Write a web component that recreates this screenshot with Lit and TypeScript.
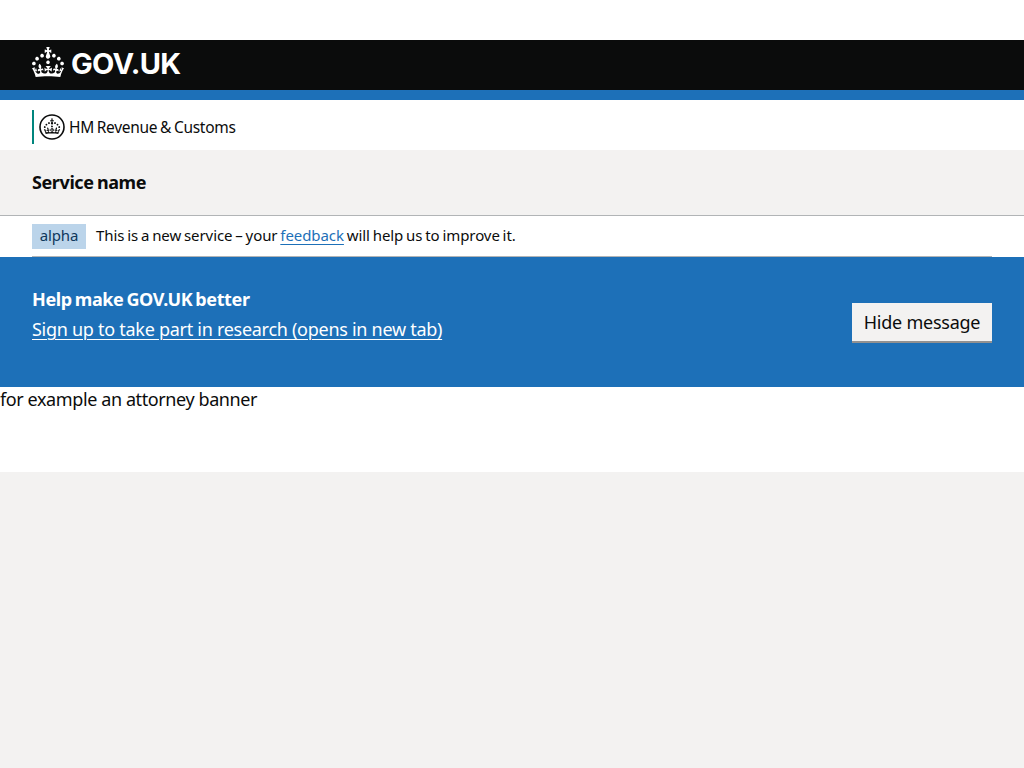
import { LitElement, html, css, svg } from "lit";
import { customElement } from "lit/decorators.js";

const crown = svg`<path fill="currentColor" d="M22.6 10.4c-1 .4-2-.1-2.4-1-.4-.9.1-2 1-2.4.9-.4 2 .1 2.4 1s-.1 2-1 2.4m-5.9 6.7c-.9.4-2-.1-2.4-1-.4-.9.1-2 1-2.4.9-.4 2 .1 2.4 1s-.1 2-1 2.4m10.8-3.7c-1 .4-2-.1-2.4-1-.4-.9.1-2 1-2.4.9-.4 2 .1 2.4 1s0 2-1 2.4m3.3 4.8c-1 .4-2-.1-2.4-1-.4-.9.1-2 1-2.4.9-.4 2 .1 2.4 1s-.1 2-1 2.4M17 4.7l2.3 1.2V2.5l-2.3.7-.2-.2.9-3h-3.4l.9 3-.2.2c-.1.1-2.3-.7-2.3-.7v3.4L15 4.7c.1.1.1.2.2.2l-1.3 4c-.1.2-.1.4-.1.6 0 1.1.8 2 1.9 2.2h.7c1-.2 1.9-1.1 1.9-2.1 0-.2 0-.4-.1-.6l-1.3-4c-.1-.2 0-.2.1-.3m-7.6 5.7c.9.4 2-.1 2.4-1 .4-.9-.1-2-1-2.4-.9-.4-2 .1-2.4 1s0 2 1 2.4m-5 3c.9.4 2-.1 2.4-1 .4-.9-.1-2-1-2.4-.9-.4-2 .1-2.4 1s.1 2 1 2.4m-3.2 4.8c.9.4 2-.1 2.4-1 .4-.9-.1-2-1-2.4-.9-.4-2 .1-2.4 1s0 2 1 2.4m14.8 11c4.4 0 8.6.3 12.3.8 1.1-4.5 2.4-7 3.7-8.8l-2.5-.9c.2 1.3.3 1.9 0 2.7-.4-.4-.8-1.1-1.1-2.3l-1.2 4c.7-.5 1.3-.8 2-.9-1.1 2.5-2.6 3.1-3.5 3-1.1-.2-1.7-1.2-1.5-2.1.3-1.2 1.5-1.5 2.1-.1 1.1-2.3-.8-3-2-2.3 1.9-1.9 2.1-3.5.6-5.6-2.1 1.6-2.1 3.2-1.2 5.5-1.2-1.4-3.2-.6-2.5 1.6.9-1.4 2.1-.5 1.9.8-.2 1.1-1.7 2.1-3.5 1.9-2.7-.2-2.9-2.1-2.9-3.6.7-.1 1.9.5 2.9 1.9l.4-4.3c-1.1 1.1-2.1 1.4-3.2 1.4.4-1.2 2.1-3 2.1-3h-5.4s1.7 1.9 2.1 3c-1.1 0-2.1-.2-3.2-1.4l.4 4.3c1-1.4 2.2-2 2.9-1.9-.1 1.5-.2 3.4-2.9 3.6-1.9.2-3.4-.8-3.5-1.9-.2-1.3 1-2.2 1.9-.8.7-2.3-1.2-3-2.5-1.6.9-2.2.9-3.9-1.2-5.5-1.5 2-1.3 3.7.6 5.6-1.2-.7-3.1 0-2 2.3.6-1.4 1.8-1.1 2.1.1.2.9-.3 1.9-1.5 2.1-.9.2-2.4-.5-3.5-3 .6 0 1.2.3 2 .9l-1.2-4c-.3 1.1-.7 1.9-1.1 2.3-.3-.8-.2-1.4 0-2.7l-2.9.9C1.3 23 2.6 25.5 3.7 30c3.7-.5 7.9-.8 12.3-.8"/>`;

@customElement("app-root")
export class AppRoot extends LitElement {
  static styles = css`
    :host {
      display: block;
      min-height: 768px;
      background: #f3f2f1;
      color: #0b0c0c;
      font-family: "Noto Sans", sans-serif;
      font-size: 18px;
      line-height: 25px;
      white-space: nowrap;
    }
    .page { box-sizing: border-box; height: 472px; padding-top: 40px; background: #fff; }
    .header {
      box-sizing: border-box; height: 60px; padding: 7px 32px 0;
      display: flex; gap: 7px;
      background: #0b0c0c; color: #fff; border-bottom: 10px solid #1d70b8;
    }
    .crown { flex: none; width: 32px; height: 30px; display: block; }
    .wordmark { font: bold 29px/34px Inter, sans-serif; letter-spacing: -0.7px; }
    .org { height: 50px; padding: 10px 32px 0; box-sizing: border-box; }
    .org-inner {
      display: flex; align-items: center; height: 34px; gap: 4px;
      border-left: 2px solid #00857d; padding-left: 5px;
      font-size: 15.5px;
    }
    .crest { width: 26px; height: 26px; display: block; }
    .org-name { letter-spacing: -0.3px; word-spacing: -0.9px; }
    .service {
      box-sizing: border-box; height: 66px; padding: 20px 32px 0;
      background: #f3f2f1; border-bottom: 1px solid #b1b4b6; font-weight: 700;
    }
    .service-name { letter-spacing: -0.4px; word-spacing: -1px; }
    .phase {
      box-sizing: border-box; height: 41px; margin: 0 32px; padding-top: 8px;
      display: flex; gap: 10px; border-bottom: 1px solid #b1b4b6;
      font-size: 15px; line-height: 23px;
    }
    .tag {
      box-sizing: border-box; width: 54px; height: 25px; text-align: center;
      background: #bbd4ea; color: #0f385c; font-weight: 400; letter-spacing: -0.1px;
    }
    .phase-text { letter-spacing: -0.07px; word-spacing: -1px; }
    .link { color: #1d70b8; text-decoration: underline; text-decoration-thickness: 1px; text-underline-offset: 3px; }
    .research {
      box-sizing: border-box; height: 130px; padding: 30px 32px 0;
      display: flex; justify-content: space-between;
      background: #1d70b8; color: #fff;
    }
    .research-title { font-weight: 700; margin-bottom: 5px; letter-spacing: -0.38px; word-spacing: -1.3px; }
    .signup {
      color: #fff; letter-spacing: -0.28px;
      text-decoration: underline; text-decoration-thickness: 1px; text-underline-offset: 3px;
    }
    .hide {
      box-sizing: border-box; width: 140px; height: 40px; margin: 16px 0 0; padding: 0;
      border: 0; border-bottom: 2px solid #929191; border-radius: 0;
      background: #f3f2f1; color: #0b0c0c; font: inherit; letter-spacing: -0.25px;
    }
    .extra { letter-spacing: -0.4px; }
  `;

  render() {
    return html`
      <div class="page">
        <header class="header">
          <svg class="crown" viewBox="0 0 32 30" aria-hidden="true">${crown}</svg>
          <span class="wordmark">GOV.UK</span>
        </header>
        <div class="org">
          <div class="org-inner">
            <svg class="crest" viewBox="0 0 26 26" aria-hidden="true">
              <circle cx="13" cy="13" r="12" fill="none" stroke="currentColor" stroke-width="1.6" />
              <g transform="translate(4.8 4.6) scale(0.512)">${crown}</g>
            </svg>
            <span class="org-name">HM Revenue &amp; Customs</span>
          </div>
        </div>
        <div class="service"><span class="service-name">Service name</span></div>
        <div class="phase">
          <strong class="tag">alpha</strong>
          <span class="phase-text">This is a new service – your <a class="link" href="#">feedback</a> will help us to improve it.</span>
        </div>
        <section class="research">
          <div>
            <div class="research-title">Help make GOV.UK better</div>
            <a class="signup" href="#">Sign up to take part in research (opens in new tab)</a>
          </div>
          <button class="hide">Hide message</button>
        </section>
        <div class="extra">for example an attorney banner</div>
      </div>
    `;
  }
}
